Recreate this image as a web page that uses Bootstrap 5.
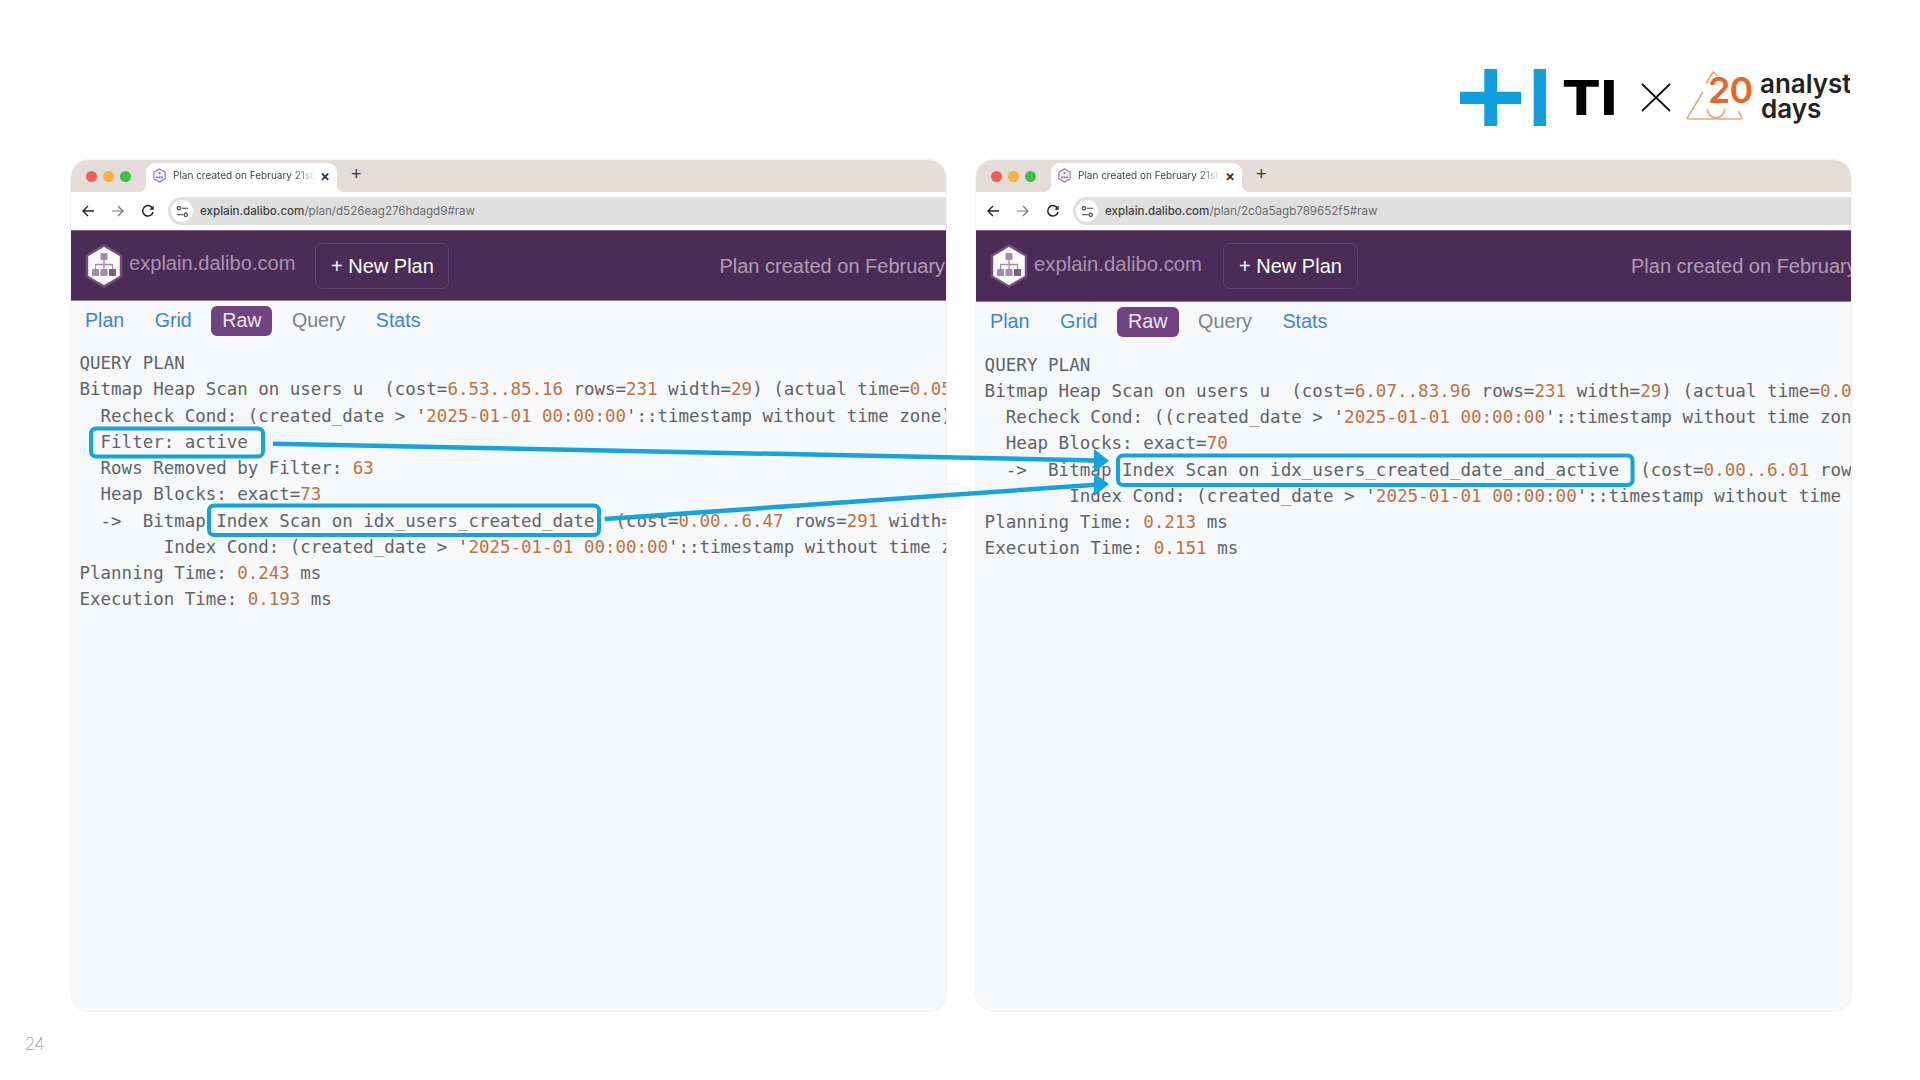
<!DOCTYPE html>
<html lang="en">
<head>
<meta charset="utf-8">
<title>Slide 24</title>
<link href="https://cdn.jsdelivr.net/npm/bootstrap@5.3.0/dist/css/bootstrap.min.css" rel="stylesheet">
<style>
html,body{margin:0;background:#fff;width:1920px;height:1080px;overflow:hidden}
.slide{position:relative;width:1920px;height:1080px;padding:69px 0 0 71px;font-family:"Liberation Sans",sans-serif}
.brandrow{height:91px;padding-right:70px}
.brandlogo{display:block;width:400px;height:60px}
.winrow{gap:30px}
.win{width:875px;height:851px;border-radius:18px;background:#f7f8fa;overflow:hidden;box-shadow:0 0 0 1px #f1f2f4}
.titlebar{height:32px;background:#e3dcd9;padding-left:15px}
.light{width:11px;height:11px;border-radius:50%;margin-right:6px}
.l-r{background:#f35d56}.l-y{background:#f4b23c}.l-g{background:#3ec048}
.ctab{position:relative;width:191px;height:29px;margin:3px 0 0 9px;background:#fff;border-radius:9px 9px 0 0;padding:0 7px 5px 6px;font:10px Inter,sans-serif;color:#444}
.ctab::before,.ctab::after{content:"";position:absolute;bottom:0;width:8px;height:8px}
.ctab::before{left:-8px;background:radial-gradient(circle at 0 0,transparent 8px,#fff 8.5px)}
.ctab::after{right:-8px;background:radial-gradient(circle at 100% 0,transparent 8px,#fff 8.5px)}
.fav{width:15px;height:15px;flex:none;margin-right:6px}
.tabname{flex:1;white-space:nowrap;overflow:hidden;-webkit-mask-image:linear-gradient(90deg,#000 84%,transparent 100%);mask-image:linear-gradient(90deg,#000 84%,transparent 100%)}
.tabx{font-size:15px;line-height:1;color:#333;margin-left:4px;font-weight:600}
.tabplus{font-size:18px;line-height:1;color:#333;margin-left:14px;padding-bottom:4px}
.toolbar{height:38px;background:#fff;padding-left:10px;padding-top:5px;padding-bottom:5px}
.navico{width:14px;height:14px;margin-right:16px;flex:none}
.urlbar{flex:1;height:28px;background:#e0e0e0;border-radius:14px 0 0 14px;margin-left:-3px;padding-left:3px;font:500 11.6px Inter,sans-serif;color:#3f3f3f;white-space:nowrap}
.sitebtn{width:22px;height:22px;border-radius:50%;background:#fff;margin-right:7px;flex:none}
.urlrest{color:#6a6a6a;font-weight:400}
.apphead{height:71px;background:#4b2c56;border-top:1px solid #7d6486;border-bottom:1px solid #8d7896;padding:0 0 0 13px;flex-wrap:nowrap;justify-content:flex-start;overflow:hidden;white-space:nowrap;font-size:20px}
.hexlogo{width:40px;height:44px;flex:none;margin-right:5px}
.brandtxt{color:#a994b0;padding-bottom:4px;flex:none;font-size:20.1px}
.newbtn{--bs-btn-color:#fff;--bs-btn-border-color:#634670;--bs-btn-hover-color:#fff;--bs-btn-hover-border-color:#634670;--bs-btn-border-radius:7px;font-size:20px;line-height:1;flex:none;width:134px;height:46px;margin-left:20px;padding:0}
.plantitle{color:#b09cb6;margin-left:270px;flex:none}
.tabsrow{padding:5px 0 0 3px;gap:8.5px;font-size:19.6px;line-height:1}
.tabsrow .nav-link{padding:0 11px;height:30px;line-height:29px;--bs-nav-pills-border-radius:6px;--bs-nav-link-color:#3c84dc;--bs-nav-link-hover-color:#3c84dc;--bs-nav-pills-link-active-bg:#6f4280;--bs-nav-pills-link-active-color:#eee6f0;font-size:19.6px}
.tabsrow .nav-link.faint{color:#7e8288}
.planraw{margin:14px 0 0;padding-left:8.6px;font:17.47px/26.25px "DejaVu Sans Mono",monospace;color:#5f6368;white-space:pre;overflow:hidden}
.val{color:#bf7240}
.second .apphead{height:72px}
.second .brandtxt{font-size:20.3px}
.second .newbtn{width:135px;margin-left:21px}
.second .plantitle{margin-left:273px}
.second .tabsrow .nav-link{font-size:19.8px}
.second .planraw{margin-top:14.6px;font-size:17.57px}
.marks{position:absolute;left:0;top:0;width:1920px;height:1080px;pointer-events:none}
.pageno{position:absolute;left:25px;top:1033px;font:300 17px Lato,sans-serif;color:#a5a5a5}
</style>
</head>
<body>
<svg width="0" height="0" class="d-block position-absolute" aria-hidden="true">
<symbol id="favi" viewBox="0 0 16 16"><path d="M8 1l6 3.4v7.2L8 15l-6-3.4V4.400z" fill="#f1ecf3" stroke="#8e6f9c" stroke-width="1.100"/><path d="M7 4.500h2v2H7zM4.500 9h2v2h-2zM7 9h2v2H7zM9.500 9h2v2h-2z" fill="#8e6f9c"/></symbol>
<symbol id="hexa" viewBox="0 0 40 44"><path d="M20 1.500l17 10v21l-17 10-17-10v-21z" fill="#fff" stroke="#71507f" stroke-width="2.500" stroke-linejoin="round"/><g fill="#a68bb0"><rect x="16.500" y="9" width="7" height="7" rx="1"/><rect x="8" y="25" width="7" height="7" rx="1"/><rect x="16.500" y="25" width="7" height="7" rx="1"/></g><rect x="25" y="25" width="7" height="7" rx="1" fill="#7d5c8a"/><path d="M20 16v9M11.500 25v-4.500h17V25" fill="none" stroke="#a68bb0" stroke-width="1.300"/></symbol>
<symbol id="backi" viewBox="0 0 14 14"><path d="M13 7H2M7 2L2 7l5 5" fill="none" stroke="currentColor" stroke-width="1.400"/></symbol>
<symbol id="fwdi" viewBox="0 0 14 14"><path d="M1 7h11M7 2l5 5-5 5" fill="none" stroke="currentColor" stroke-width="1.200"/></symbol>
<symbol id="reli" viewBox="0 0 14 14"><path d="M11.800 5A5.200 5.200 0 1 0 12 8" fill="none" stroke="currentColor" stroke-width="1.500"/><path d="M12.600 1.600v4.200H8.400z" fill="currentColor"/></symbol>
<symbol id="tune" viewBox="0 0 14 14"><path d="M6 3.500h7M1 10.500h7" stroke="#444" stroke-width="1.200"/><circle cx="3" cy="3.500" r="1.800" fill="none" stroke="#444" stroke-width="1.200"/><circle cx="10.500" cy="10.500" r="1.800" fill="none" stroke="#444" stroke-width="1.200"/></symbol>
</svg>

<div class="slide">
  <div class="brandrow d-flex justify-content-end">
    <svg class="brandlogo" viewBox="1450 69 400 60" role="img" aria-label="TI x analyst days">
      <path d="M1460 91.700h24.300V69h12.700v22.700H1521v12.400h-24v21.900h-12.700v-21.900H1460zM1533.700 69h12.300v57h-12.300z" fill="#0ea0de"/>
      <text x="1562" y="115" font-family="Inter,sans-serif" font-weight="800" font-size="48" fill="#000" textLength="55" lengthAdjust="spacingAndGlyphs">TI</text>
      <path d="M1642 84l28 27M1670 84l-28 27" stroke="#111" stroke-width="1.800" fill="none"/>
      <path d="M1706 84l7-12 5 4M1703 92l-15.500 25.500q-.5 1.500 1 1.500H1740q2 0 1.500-2l-3-6M1707 109q2 9 9 9t9-9" fill="none" stroke="#eca67a" stroke-width="1.600"/>
      <text x="1708" y="103" font-family="Inter,sans-serif" font-weight="600" font-size="36" fill="#e8682a" letter-spacing="-1">20</text>
      <text x="1760" y="93" font-family="Inter,sans-serif" font-weight="600" font-size="26" fill="#222">analyst</text>
      <text x="1761" y="118" font-family="Inter,sans-serif" font-weight="600" font-size="26" fill="#222">days</text>
    </svg>
  </div>

  <div class="winrow d-flex">
    <div class="win">
      <div class="titlebar d-flex align-items-center">
        <span class="light l-r"></span><span class="light l-y"></span><span class="light l-g"></span>
        <div class="ctab d-flex align-items-center">
          <svg class="fav"><use href="#favi"/></svg>
          <span class="tabname">Plan created on February 21st, 2025</span>
          <span class="tabx">×</span>
        </div>
        <span class="tabplus">+</span>
      </div>
      <div class="toolbar d-flex align-items-center">
        <svg class="navico text-dark"><use href="#backi"/></svg>
        <svg class="navico text-secondary"><use href="#fwdi"/></svg>
        <svg class="navico text-dark"><use href="#reli"/></svg>
        <div class="urlbar d-flex align-items-center">
          <span class="sitebtn d-flex align-items-center justify-content-center"><svg width="13" height="13"><use href="#tune"/></svg></span>
          <span>explain.dalibo.com<span class="urlrest">/plan/d526eag276hdagd9#raw</span></span>
        </div>
      </div>
      <nav class="navbar apphead">
        <svg class="hexlogo"><use href="#hexa"/></svg>
        <span class="brandtxt">explain.dalibo.com</span>
        <a class="btn newbtn d-flex align-items-center justify-content-center" href="#">+ New Plan</a>
        <span class="plantitle">Plan created on February 21st, 2025</span>
      </nav>
      <ul class="nav nav-pills tabsrow">
        <li class="nav-item"><a class="nav-link" href="#">Plan</a></li>
        <li class="nav-item"><a class="nav-link" href="#">Grid</a></li>
        <li class="nav-item"><a class="nav-link active" href="#">Raw</a></li>
        <li class="nav-item"><a class="nav-link faint" href="#">Query</a></li>
        <li class="nav-item"><a class="nav-link" href="#">Stats</a></li>
      </ul>
<pre class="planraw">QUERY PLAN
Bitmap Heap Scan on users u  (cost=<span class="val">6.53..85.16</span> rows=<span class="val">231</span> width=<span class="val">29</span>) (actual time=<span class="val">0.056..0.312</span> rows=<span class="val">168</span> loops=<span class="val">1</span>)
  Recheck Cond: (created_date &gt; '<span class="val">2025-01-01 00:00:00</span>'::timestamp without time zone)
  Filter: active
  Rows Removed by Filter: <span class="val">63</span>
  Heap Blocks: exact=<span class="val">73</span>
  -&gt;  Bitmap Index Scan on idx_users_created_date  (cost=<span class="val">0.00..6.47</span> rows=<span class="val">291</span> width=<span class="val">0</span>)
        Index Cond: (created_date &gt; '<span class="val">2025-01-01 00:00:00</span>'::timestamp without time zone)
Planning Time: <span class="val">0.243</span> ms
Execution Time: <span class="val">0.193</span> ms</pre>
    </div>

    <div class="win second">
      <div class="titlebar d-flex align-items-center">
        <span class="light l-r"></span><span class="light l-y"></span><span class="light l-g"></span>
        <div class="ctab d-flex align-items-center">
          <svg class="fav"><use href="#favi"/></svg>
          <span class="tabname">Plan created on February 21st, 2025</span>
          <span class="tabx">×</span>
        </div>
        <span class="tabplus">+</span>
      </div>
      <div class="toolbar d-flex align-items-center">
        <svg class="navico text-dark"><use href="#backi"/></svg>
        <svg class="navico text-secondary"><use href="#fwdi"/></svg>
        <svg class="navico text-dark"><use href="#reli"/></svg>
        <div class="urlbar d-flex align-items-center">
          <span class="sitebtn d-flex align-items-center justify-content-center"><svg width="13" height="13"><use href="#tune"/></svg></span>
          <span>explain.dalibo.com<span class="urlrest">/plan/2c0a5agb789652f5#raw</span></span>
        </div>
      </div>
      <nav class="navbar apphead">
        <svg class="hexlogo"><use href="#hexa"/></svg>
        <span class="brandtxt">explain.dalibo.com</span>
        <a class="btn newbtn d-flex align-items-center justify-content-center" href="#">+ New Plan</a>
        <span class="plantitle">Plan created on February 21st, 2025</span>
      </nav>
      <ul class="nav nav-pills tabsrow">
        <li class="nav-item"><a class="nav-link" href="#">Plan</a></li>
        <li class="nav-item"><a class="nav-link" href="#">Grid</a></li>
        <li class="nav-item"><a class="nav-link active" href="#">Raw</a></li>
        <li class="nav-item"><a class="nav-link faint" href="#">Query</a></li>
        <li class="nav-item"><a class="nav-link" href="#">Stats</a></li>
      </ul>
<pre class="planraw">QUERY PLAN
Bitmap Heap Scan on users u  (cost=<span class="val">6.07..83.96</span> rows=<span class="val">231</span> width=<span class="val">29</span>) (actual time=<span class="val">0.043..0.287</span> rows=<span class="val">168</span> loops=<span class="val">1</span>)
  Recheck Cond: ((created_date &gt; '<span class="val">2025-01-01 00:00:00</span>'::timestamp without time zone) AND active)
  Heap Blocks: exact=<span class="val">70</span>
  -&gt;  Bitmap Index Scan on idx_users_created_date_and_active  (cost=<span class="val">0.00..6.01</span> rows=<span class="val">231</span> width=<span class="val">0</span>)
        Index Cond: (created_date &gt; '<span class="val">2025-01-01 00:00:00</span>'::timestamp without time
Planning Time: <span class="val">0.213</span> ms
Execution Time: <span class="val">0.151</span> ms</pre>
    </div>
  </div>

  <svg class="marks" viewBox="0 0 1920 1080" aria-hidden="true">
    <g fill="none" stroke="#12a5dc" stroke-width="4">
      <rect x="91" y="428.500" width="172" height="28" rx="5"/>
      <rect x="209" y="505.500" width="390" height="29.500" rx="5"/>
      <rect x="1118" y="455.500" width="514.500" height="29.500" rx="5"/>
      <path d="M273 443.700L1096 460.400M604.600 519L1096 484.800" stroke-width="4.500"/>
    </g>
    <path d="M1094 449l15 11.700-15 11.800zM1094 473l15 11-15 12z" fill="#12a5dc"/>
  </svg>
  <div class="pageno">24</div>
</div>
<script src="https://cdn.jsdelivr.net/npm/bootstrap@5.3.0/dist/js/bootstrap.bundle.min.js"></script>
</body>
</html>
